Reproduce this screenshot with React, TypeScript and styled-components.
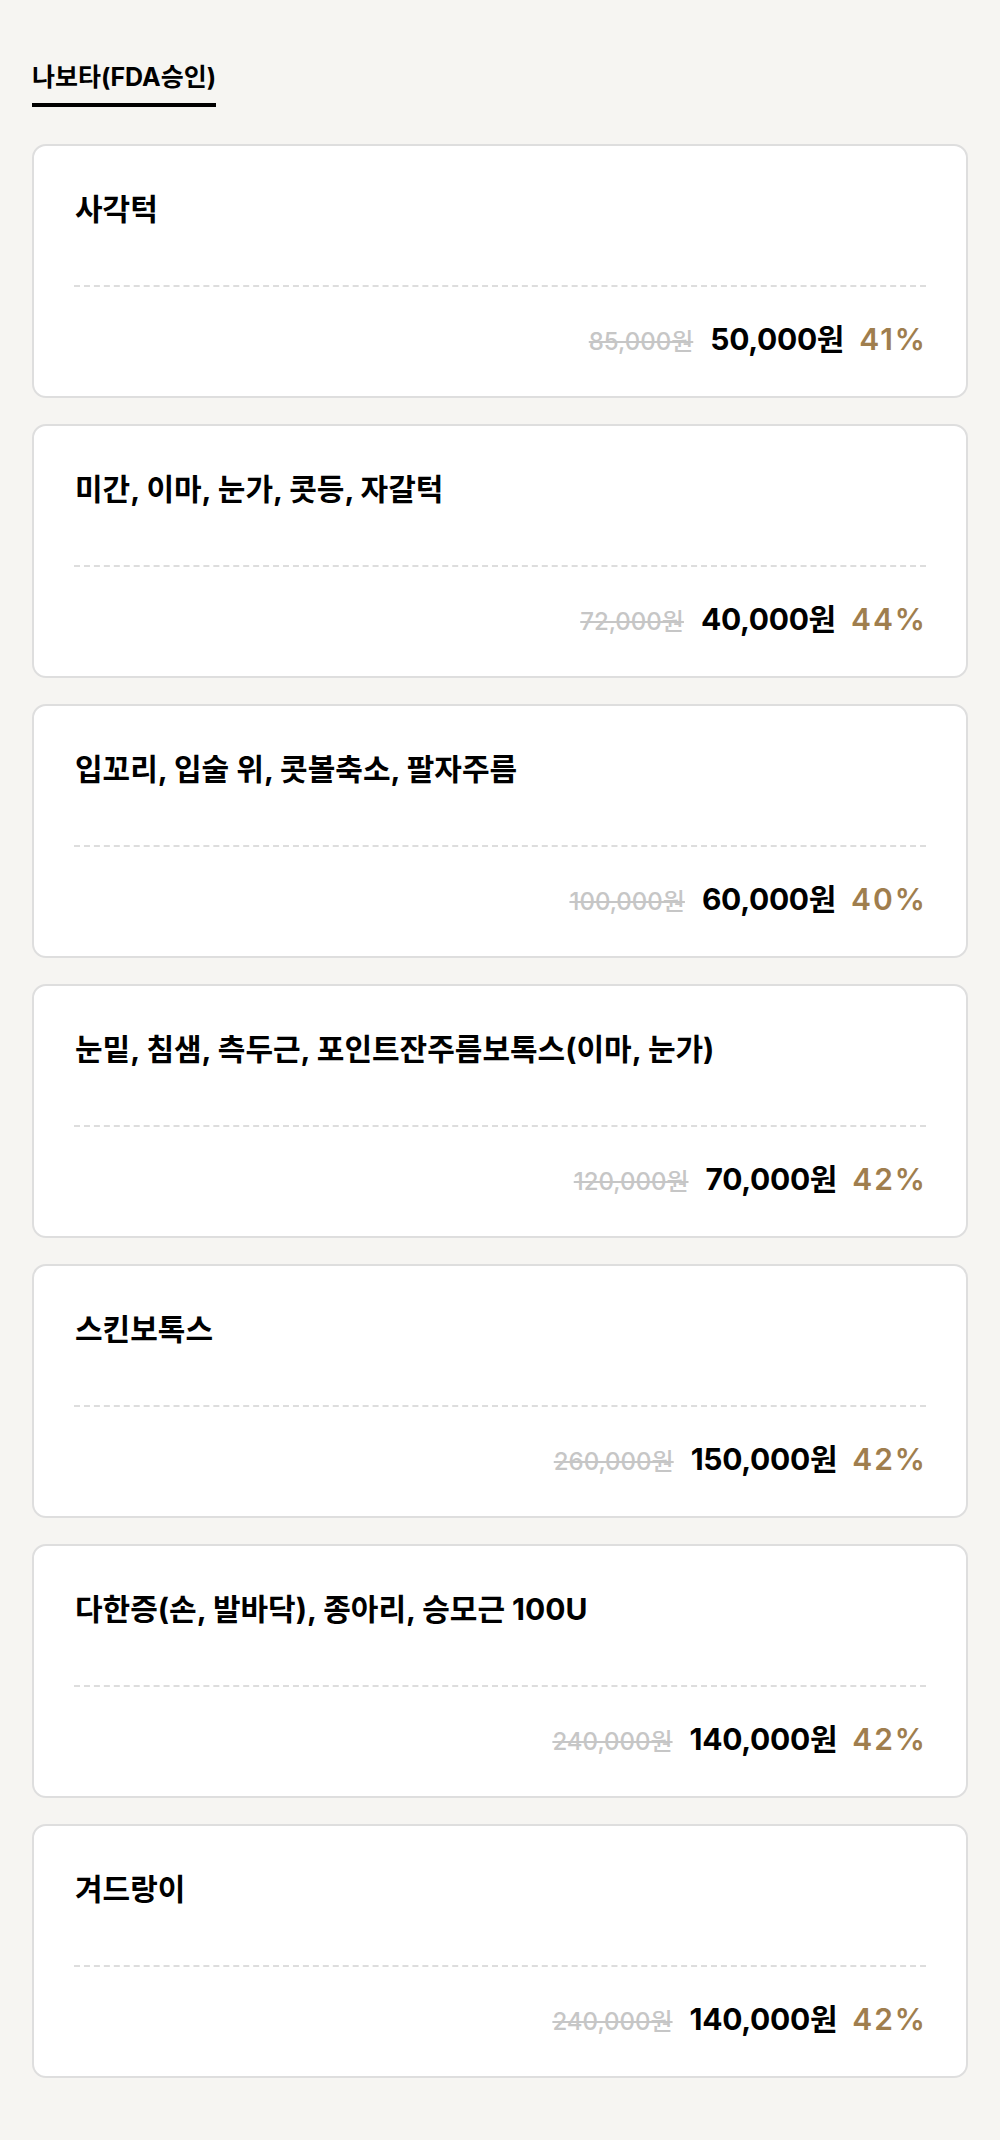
import React from "react";
import styled, { createGlobalStyle } from "styled-components";

const GlobalStyle = createGlobalStyle`
  html, body {
    margin: 0;
    padding: 0;
    background: #f6f5f2;
  }
  body {
    font-family: "Inter", "Noto Sans CJK KR", sans-serif;
    color: #000;
  }
`;

const Page = styled.div`
  padding: 61px 32px 62px;
  display: flex;
  flex-direction: column;
`;

const Tabs = styled.div`
  display: flex;
  margin-bottom: 37px;
`;

const Tab = styled.div<{ $active?: boolean }>`
  font-size: 25px;
  line-height: 32px;
  font-weight: 700;
  padding-bottom: 10px;
  border-bottom: 4px solid ${(p) => (p.$active ? "#000" : "transparent")};
`;

const List = styled.div`
  display: flex;
  flex-direction: column;
  gap: 26px;
`;

const Card = styled.div`
  background: #fff;
  border: 2px solid #dedede;
  border-radius: 14px;
  padding: 43px 40px 34px;
  display: flex;
  flex-direction: column;
`;

const Title = styled.div`
  font-size: 30px;
  line-height: 40px;
  font-weight: 700;
  padding-left: 1px;
  margin-bottom: 56px;
`;

const Divider = styled.div`
  border-top: 2px dashed #dddddd;
  margin-bottom: 32px;
`;

const PriceRow = styled.div`
  display: flex;
  justify-content: flex-end;
  align-items: baseline;
  line-height: 40px;
`;

const Original = styled.span`
  font-size: 24px;
  font-weight: 500;
  color: #c6c6c6;
  text-decoration: line-through;
  margin-right: 17px;
`;

const Price = styled.span`
  font-size: 30px;
  font-weight: 700;
  color: #000;
  letter-spacing: -0.3px;
  margin-right: 15px;
`;

const Rate = styled.span`
  font-size: 30px;
  font-weight: 600;
  letter-spacing: 2px;
  margin-right: -1px;
  color: #9f7e4e;
`;

type Item = { title: string; original: string; price: string; rate: string };

const items: Item[] = [
  { title: "사각턱", original: "85,000원", price: "50,000원", rate: "41%" },
  { title: "미간, 이마, 눈가, 콧등, 자갈턱", original: "72,000원", price: "40,000원", rate: "44%" },
  { title: "입꼬리, 입술 위, 콧볼축소, 팔자주름", original: "100,000원", price: "60,000원", rate: "40%" },
  {
    title: "눈밑, 침샘, 측두근, 포인트잔주름보톡스(이마, 눈가)",
    original: "120,000원",
    price: "70,000원",
    rate: "42%",
  },
  { title: "스킨보톡스", original: "260,000원", price: "150,000원", rate: "42%" },
  {
    title: "다한증(손, 발바닥), 종아리, 승모근 100U",
    original: "240,000원",
    price: "140,000원",
    rate: "42%",
  },
  { title: "겨드랑이", original: "240,000원", price: "140,000원", rate: "42%" },
];

export default function App() {
  return (
    <>
      <GlobalStyle />
      <Page>
        <Tabs>
          <Tab $active>나보타(FDA승인)</Tab>
        </Tabs>
        <List>
          {items.map((it) => (
            <Card key={it.title}>
              <Title>{it.title}</Title>
              <Divider />
              <PriceRow>
                <Original>{it.original}</Original>
                <Price>{it.price}</Price>
                <Rate>{it.rate}</Rate>
              </PriceRow>
            </Card>
          ))}
        </List>
      </Page>
    </>
  );
}
